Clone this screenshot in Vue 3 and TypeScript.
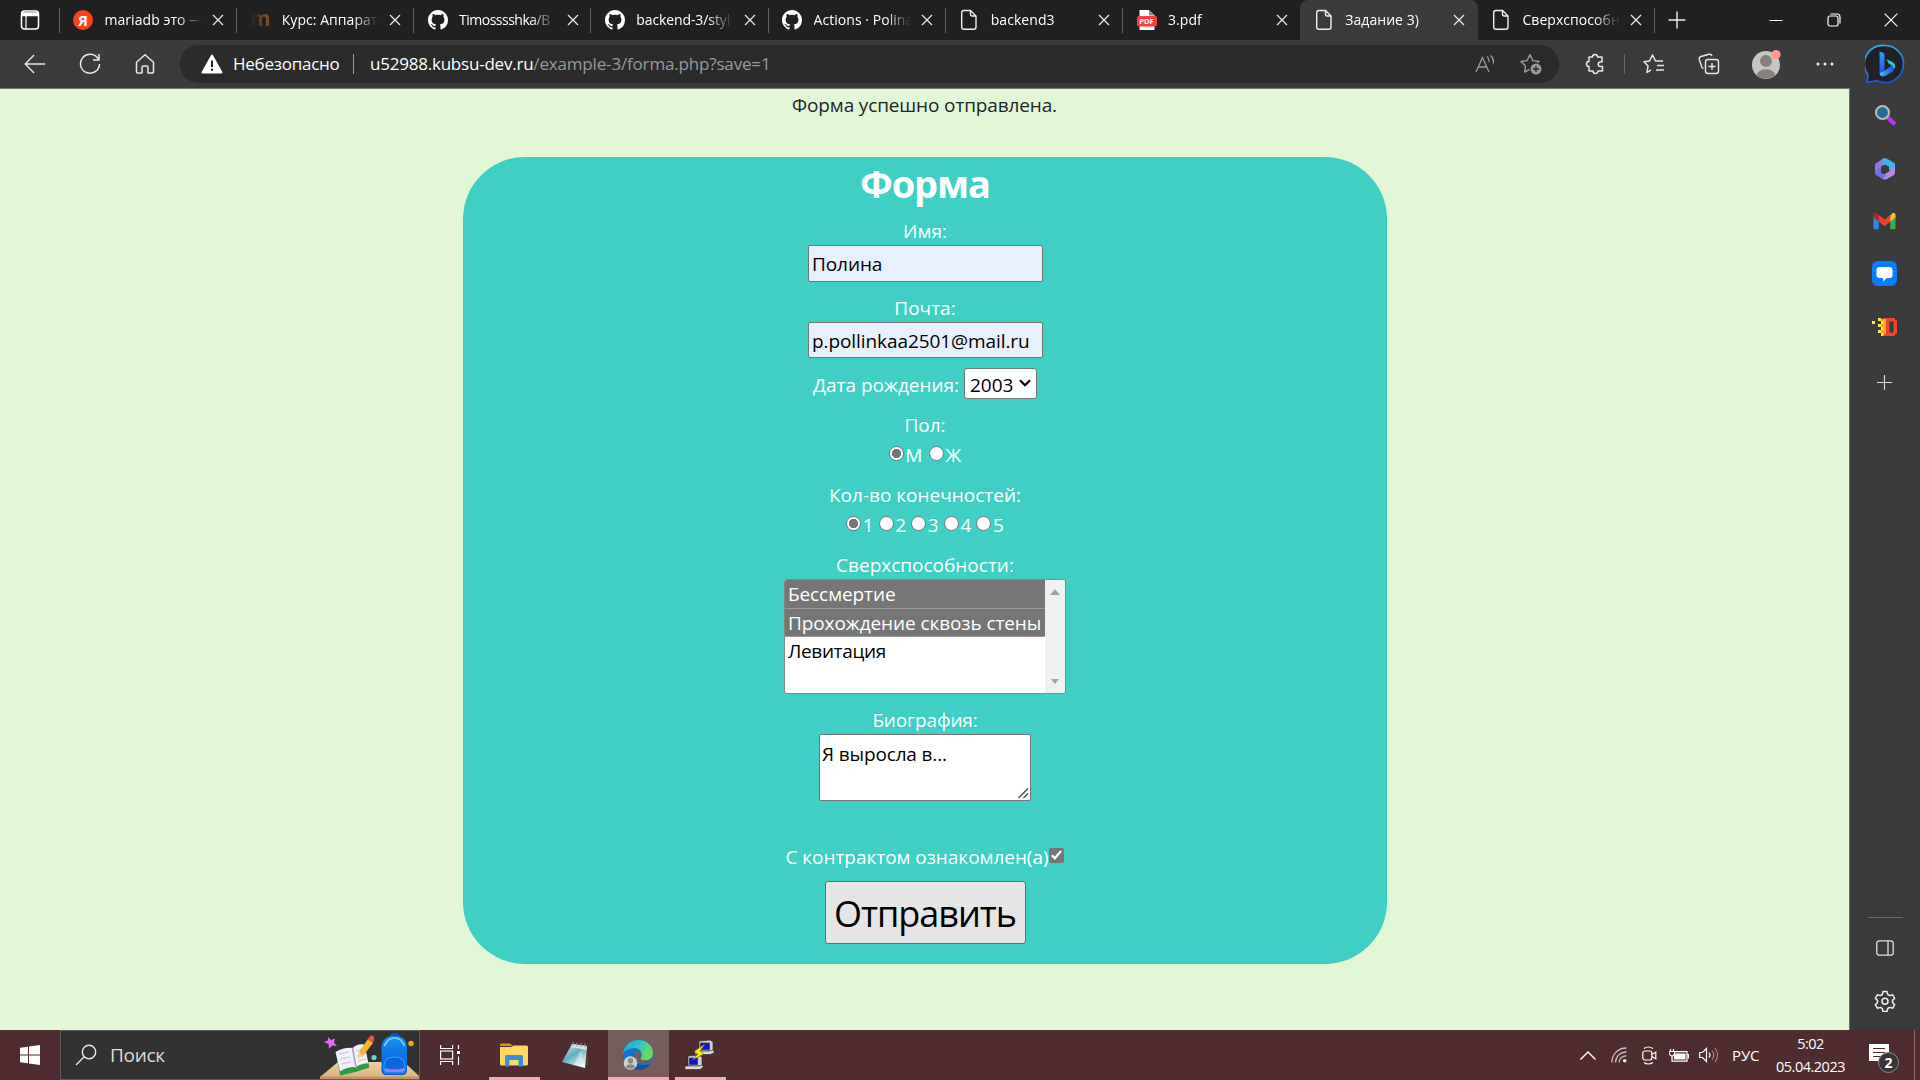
<script setup lang="ts">
import { ref } from 'vue'

interface Tab {
  icon: 'yandex' | 'moodle' | 'github' | 'file' | 'pdf'
  title: string
  active?: boolean
  noDivider?: boolean
  spacing?: string
}

const tabs: Tab[] = [
  { icon: 'yandex', title: 'mariadb это —' },
  { icon: 'moodle', title: 'Курс: Аппарат' },
  { icon: 'github', title: 'Timosssshka/B', spacing: 'tight' },
  { icon: 'github', title: 'backend-3/styl', spacing: 'snug' },
  { icon: 'github', title: 'Actions · Polina' },
  { icon: 'file', title: 'backend3' },
  { icon: 'pdf', title: '3.pdf', noDivider: true },
  { icon: 'file', title: 'Задание 3)', active: true, noDivider: true },
  { icon: 'file', title: 'Сверхспособн' },
]

const name = ref('Полина')
const email = ref('p.pollinkaa2501@mail.ru')
const bio = ref('Я выросла в...')
const gender = ref('М')
const limbs = ref('1')
const agreed = ref(true)
const powers = [
  { label: 'Бессмертие', selected: true },
  { label: 'Прохождение сквозь стены', selected: true },
  { label: 'Левитация', selected: false },
]
</script>

<template>
  <div class="screen">
    <header class="tabstrip">
      <div class="tab-menu">
        <svg width="20" height="22" viewBox="0 0 20 22" fill="none" stroke="#fff" stroke-width="1.5"><rect x="1.5" y="2" width="17" height="18" rx="3" /><path d="M2 4.5h16M2 6h16" stroke-width="2.4" /><path d="M6 7v13" stroke-width="1.2" /></svg>
      </div>
      <div v-for="(tab, i) in tabs" :key="i" class="tab" :class="{ active: tab.active, plain: tab.noDivider }">
        <span class="tab-icon">
          <span v-if="tab.icon === 'yandex'" class="yandex">Я</span>
          <span v-else-if="tab.icon === 'moodle'" class="moodle">m</span>
          <svg v-else-if="tab.icon === 'github'" width="20" height="20" viewBox="0 0 16 16" fill="#fff"><path d="M8 0C3.58 0 0 3.58 0 8c0 3.54 2.29 6.53 5.47 7.59.4.07.55-.17.55-.38 0-.19-.01-.82-.01-1.49-2.01.37-2.53-.49-2.69-.94-.09-.23-.48-.94-.82-1.13-.28-.15-.68-.52-.01-.53.63-.01 1.08.58 1.23.82.72 1.21 1.87.87 2.33.66.07-.52.28-.87.51-1.07-1.78-.2-3.64-.89-3.64-3.95 0-.87.31-1.59.82-2.15-.08-.2-.36-1.02.08-2.12 0 0 .67-.21 2.2.82.64-.18 1.32-.27 2-.27.68 0 1.36.09 2 .27 1.53-1.04 2.2-.82 2.2-.82.44 1.1.16 1.92.08 2.12.51.56.82 1.27.82 2.15 0 3.07-1.87 3.75-3.65 3.95.29.25.54.73.54 1.48 0 1.07-.01 1.93-.01 2.2 0 .21.15.46.55.38A8.013 8.013 0 0016 8c0-4.42-3.58-8-8-8z" /></svg>
          <svg v-else-if="tab.icon === 'file'" width="18" height="22" viewBox="0 0 18 22" fill="none" stroke="#eee" stroke-width="1.4"><path d="M4 1.5h6.5L16 7v11a2.300 2.300 0 0 1-2.300 2.300H4A2.300 2.300 0 0 1 1.700 18V3.800A2.300 2.300 0 0 1 4 1.500zM10.500 1.500V5.500A1.500 1.500 0 0 0 12 7h4" /></svg>
          <span v-else class="pdf"><svg width="20" height="20" viewBox="0 0 20 20"><path d="M2.500 0H12l5.500 5.500V20h-15z" fill="#fff" /><path d="M12 0v5.500h5.500z" fill="#888" /><rect y="6" width="20" height="10.500" rx="2" fill="#ff3b3f" /></svg><b>PDF</b></span>
        </span>
        <span class="tab-title" :class="tab.spacing">{{ tab.title }}</span>
        <svg class="tab-close" width="12" height="12" viewBox="0 0 12 12" stroke="#e6e6e6" stroke-width="1.3"><path d="M1 1l10 10M11 1L1 11" /></svg>
      </div>
      <svg class="new-tab" width="18" height="18" viewBox="0 0 18 18" stroke="#eee" stroke-width="1.4"><path d="M9 .5v17M.5 9h17" /></svg>
      <div class="window-controls">
        <svg width="14" height="14" viewBox="0 0 14 14" stroke="#fff"><path d="M.5 7.500h13" /></svg>
        <svg width="14" height="14" viewBox="0 0 14 14" fill="none" stroke="#fff" stroke-width="1.200"><rect x="1" y="3" width="10" height="10" rx="2" /><path d="M3.500 1h6.500a3 3 0 0 1 3 3v6.500" /></svg>
        <svg width="14" height="14" viewBox="0 0 14 14" stroke="#fff" stroke-width="1.200"><path d="M.7.700l12.600 12.600M13.300.700L.7 13.300" /></svg>
      </div>
    </header>

    <div class="toolbar">
      <div class="cell"><svg width="22" height="20" viewBox="0 0 22 20" fill="none" stroke="#e8e8e8" stroke-width="1.400"><path d="M21 10H1.500M10 1L1.200 10 10 19" /></svg></div>
      <div class="cell"><svg width="22" height="22" viewBox="0 0 22 22" fill="none" stroke="#e8e8e8" stroke-width="1.500"><path d="M19.500 6.500A9.500 9.500 0 1 0 20.500 11M20 1v6h-6" /></svg></div>
      <div class="cell"><svg width="20" height="22" viewBox="0 0 20 22" fill="none" stroke="#e8e8e8" stroke-width="1.500" stroke-linejoin="round"><path d="M10 1.800L1.500 9.200V19a1 1 0 0 0 1 1H7v-5.500a1.500 1.500 0 0 1 1.500-1.500h3a1.500 1.500 0 0 1 1.500 1.500V20h4.500a1 1 0 0 0 1-1V9.200z" /></svg></div>
      <div class="address">
        <svg class="warn" width="22" height="20" viewBox="0 0 22 20"><path d="M11 1.500L20.500 18.500H1.500z" fill="#fff" stroke="#fff" stroke-width="2" stroke-linejoin="round" /><path d="M11 6.500v6.500M11 14.500v2.300" stroke="#2b2b2b" stroke-width="2" /></svg>
        <span class="insecure">Небезопасно</span>
        <i class="bar-sep"></i>
        <span class="url"><span class="host">u52988.kubsu-dev.ru</span><span class="path">/example-3/forma.php?save=1</span></span>
        <svg class="read" width="20" height="18" viewBox="0 0 20 18" fill="none" stroke="#9a9a9a" stroke-width="1.300"><path d="M1 17L7.500 2.500 14 17M3.500 12h8M12 1.500c1.500 1.300 2.200 3 2 5.500M15.500.500C18 2.500 19 5 18.300 8.500" /></svg>
        <svg class="star" width="22" height="22" viewBox="0 0 22 22" fill="none" stroke="#9a9a9a" stroke-width="1.400"><path d="M9.500 16.500L4.500 19l1-6L1 8.500l6-.9L10 1.500l2.800 6.100 6.200.9-1.500 1.500" stroke-linejoin="round" /><circle cx="16" cy="16" r="5.500" fill="#9a9a9a" stroke="none" /><path d="M16 13v6M13 16h6" stroke="#2b2b2b" /></svg>
      </div>
      <div class="cell first"><svg width="20" height="22" viewBox="0 0 20 22" fill="none" stroke="#e8e8e8" stroke-width="1.500" stroke-linejoin="round"><path d="M4 4h3.500a2.500 2.500 0 0 1 5 0H17v5h-1.500a2 2 0 0 0 0 4.500H17.500V18H13a2.500 2.500 0 0 1-5 0H4v-4.500a2.500 2.500 0 0 1 0-5z" /></svg></div>
      <i class="tool-sep"></i>
      <div class="cell"><svg width="22" height="20" viewBox="0 0 22 20" fill="none" stroke="#e8e8e8" stroke-width="1.500" stroke-linejoin="round"><path d="M8 15.800L4 18.500l1-6.500L1 7.800l5.500-.8L9.500 1l3 6H20M14 11.500h7M13 16h8" /></svg></div>
      <div class="cell"><svg width="22" height="22" viewBox="0 0 22 22" fill="none" stroke="#e8e8e8" stroke-width="1.400"><rect x="7.500" y="6.500" width="13" height="14" rx="2.500" /><path d="M14 10v7M10.500 13.500h7M5.500 15.500A2.500 2.500 0 0 1 3.500 13L1.300 6.500A2.500 2.500 0 0 1 3 3.500L11 1.300A2.500 2.500 0 0 1 14 3" /></svg></div>
      <div class="cell wide"><svg width="32" height="32" viewBox="0 0 32 32"><circle cx="15" cy="17" r="14" fill="#c9c6c2" /><circle cx="15" cy="13" r="6" fill="#85817d" /><path d="M5.500 27a10 8.500 0 0 1 19 0 14 14 0 0 1-19 0z" fill="#85817d" /><circle cx="25" cy="6.500" r="4.600" fill="#ff9a94" /></svg></div>
      <div class="cell dots"><svg width="18" height="4" viewBox="0 0 18 4" fill="#eee"><circle cx="2" cy="2" r="1.500" /><circle cx="9" cy="2" r="1.500" /><circle cx="16" cy="2" r="1.500" /></svg></div>
      <div class="bing"><svg width="40" height="40" viewBox="0 0 40 40">
        <defs><linearGradient id="ring" x1="0" y1="0" x2=".3" y2="1"><stop offset="0" stop-color="#35b9ef" /><stop offset="1" stop-color="#1757e0" /></linearGradient><linearGradient id="bb" x1="0" y1="0" x2="1" y2="0"><stop offset="0" stop-color="#52c6f8" /><stop offset=".5" stop-color="#2b80f3" /><stop offset="1" stop-color="#1b50e0" /></linearGradient><linearGradient id="stem" x1="0" y1="0" x2="0" y2="1"><stop offset="0" stop-color="#2aa3f0" /><stop offset="1" stop-color="#1a4fe6" /></linearGradient></defs>
        <path d="M20 1.500A18.500 18.500 0 1 1 12 36.700L2 38.300 3 31A18.500 18.500 0 0 1 20 1.500z" fill="#202124" stroke="url(#ring)" stroke-width="1.700" />
        <path d="M14.500 7.500l3.500 1.300q1.500.6 1.500 2.200V26l-5 3.500z" fill="url(#stem)" /><path d="M14.500 29l5.500-2.500 8-6q3 4-.5 7.500L20 32q-5 1.500-5.500-3z" fill="url(#bb)" /><path d="M21.500 15.200l5.500 2.600q4 2 3 6.200-1 1.500-2.500-2.500L24 20z" fill="#33c5e3" />
      </svg></div>
    </div>

    <div class="body">
      <main class="page">
        <p class="message">Форма успешно отправлена.</p>
        <form class="card" @submit.prevent>
          <h1>Форма</h1>
          <label class="label">Имя:</label>
          <input v-model="name" class="text" type="text" spellcheck="false" />
          <label class="label mail">Почта:</label>
          <input v-model="email" class="text short" type="text" spellcheck="false" />
          <div class="birth">
            <span>Дата рождения:</span>
            <div class="select"><span>2003</span><svg width="12" height="8" viewBox="0 0 12 8" fill="none" stroke="#000" stroke-width="2.200"><path d="M1 1.300l5 5 5-5" /></svg></div>
          </div>
          <label class="label sex">Пол:</label>
          <div class="radios gender">
            <label v-for="g in ['М', 'Ж']" :key="g"><input v-model="gender" type="radio" name="gender" :value="g" />{{ g }}</label>
          </div>
          <label class="label limbs-label">Кол-во конечностей:</label>
          <div class="radios limbs">
            <label v-for="n in ['1', '2', '3', '4', '5']" :key="n"><input v-model="limbs" type="radio" name="limbs" :value="n" />{{ n }}</label>
          </div>
          <label class="label powers-label">Сверхспособности:</label>
          <div class="listbox">
            <div class="options">
              <div v-for="p in powers" :key="p.label" class="option" :class="{ selected: p.selected }">{{ p.label }}</div>
            </div>
            <div class="scroll">
              <svg width="10" height="6" viewBox="0 0 10 6"><path d="M5 0l5 6H0z" fill="#a3a3a3" /></svg>
              <svg width="8" height="5" viewBox="0 0 8 5"><path d="M0 0h8L4 5z" fill="#a3a3a3" /></svg>
            </div>
          </div>
          <label class="label bio-label">Биография:</label>
          <div class="area">
            <textarea v-model="bio" spellcheck="false"></textarea>
            <svg class="grip" width="11" height="11" viewBox="0 0 11 11" stroke="#444" stroke-width="1.200"><path d="M.5 10L10 .5M5.500 10L10 5.500" /></svg>
          </div>
          <div class="agree"><span>С контрактом ознакомлен(а)</span>
            <button type="button" class="check" @click="agreed = !agreed"><svg v-if="agreed" width="11" height="10" viewBox="0 0 11 10" fill="none" stroke="#fff" stroke-width="2.200"><path d="M.8 5.300l3 3L10 1" /></svg></button>
          </div>
          <button class="submit" type="submit">Отправить</button>
        </form>
      </main>

      <aside class="sidebar">
        <div class="side-item"><svg width="22" height="22" viewBox="0 0 22 22"><path d="M14.500 14l5 5" stroke="#b936ee" stroke-width="4.500" stroke-linecap="round" /><circle cx="8.500" cy="8.500" r="6.500" fill="#1f6d96" stroke="#b9b9b9" stroke-width="2.200" /></svg></div>
        <div class="side-item office"><svg width="22" height="22" viewBox="0 0 22 22"><path d="M1 6l8-5.500L12 0 10 8 7 10v6l-3 1-3-2z" fill="#8f7ad8" /><path d="M9 .8Q11-.4 13 .8L21 5.300v9.200l-6-2.500V8.500L8 5.500z" fill="#3ab4ee" /><path d="M21 9v6q0 1.500-1.500 2.200L13 21q-2 1-4 0l-3-2 9-5.500z" fill="#b987dd" /><path d="M1 12l6-2v4.500l5 3-3.500 3.300L2 17q-1-.8-1-2z" fill="#6f74dc" /><path d="M8.500 7.500L11 7l4 2.200v3.600L11 15l-4-2.200V9z" fill="#3b3b3b" /></svg></div>
        <div class="side-item"><svg width="23" height="18" viewBox="0 0 23 18"><path d="M.5 4v12a1.300 1.300 0 0 0 1.300 1.300h4V7z" fill="#2f86e5" /><path d="M22.500 4v12a1.300 1.300 0 0 1-1.300 1.300h-4V7z" fill="#43a94b" /><path d="M17.200 3.500L20 .8a2 2 0 0 1 2.500 2V5.500L17.200 9.700z" fill="#fbbc2c" /><path d="M.5 5.500V2.800a2 2 0 0 1 2.500-2l2.800 2.700v6.200z" fill="#c5221f" /><path d="M5.800 3l5.700 4.500L17.200 3v6.700L11.500 14 5.800 9.700z" fill="#ea4335" /></svg></div>
        <div class="side-item"><svg width="25" height="25" viewBox="0 0 25 25"><rect width="25" height="25" rx="6" fill="#0a7cff" /><path d="M7.500 6h10a3 3 0 0 1 3 3v5a3 3 0 0 1-3 3h-2.500l-4 3.500V17H7.500a3 3 0 0 1-3-3V9a3 3 0 0 1 3-3z" fill="#fff" /></svg></div>
        <div class="side-item"><svg width="26" height="18" viewBox="0 0 26 18"><path d="M12 0h11v2h2v14h-2v2H11V0z" fill="#ef4432" /><path d="M17.500 3.500H21.500v11h-4z" fill="#3b3b3b" /><path d="M9 1h5v15h-5z" fill="#f9a61d" /><path d="M0 3h3v3H0zM6 0h3v3H6zM9 3h2.500v3H9zM6 6h3v3H6zM9 9h2.500v3H9zM6 12h3v3H6zM9 15h2.500v3H9z" fill="#fbe34d" /></svg></div>
        <div class="side-item plus"><svg width="15" height="15" viewBox="0 0 15 15" stroke="#ddd" stroke-width="1.100"><path d="M7.500 0v15M0 7.500h15" /></svg></div>
        <i class="side-sep"></i>
        <div class="side-item"><svg width="18" height="16" viewBox="0 0 18 16" fill="none" stroke="#e0e0e0" stroke-width="1.300"><rect x=".8" y=".8" width="16.400" height="14.400" rx="2.500" /><path d="M12 1v14" /></svg></div>
        <div class="side-item"><svg width="22" height="22" viewBox="0 0 22 22" fill="none" stroke="#eee" stroke-width="1.500" stroke-linejoin="round"><path d="M9 1.500h4l.7 3 2 1.100 3-.8 2 3.500-2.200 2.100v2.200l2.200 2.100-2 3.500-3-.8-2 1.100-.7 3H9l-.7-3-2-1.100-3 .8-2-3.500 2.200-2.100v-2.200L1.300 8.300l2-3.500 3 .8 2-1.100z" /><circle cx="11" cy="11.300" r="3" /></svg></div>
      </aside>
    </div>

    <footer class="taskbar">
      <div class="start"><svg width="20" height="20" viewBox="0 0 20 20" fill="#fff"><path d="M0 2.800l8-1.100v7.800H0zM9 1.500L20 0v9.500H9zM0 10.500h8v7.800l-8-1.100zM9 10.500h11V20L9 18.500z" /></svg></div>
      <div class="search">
        <svg width="22" height="22" viewBox="0 0 22 22" fill="none" stroke="#e6e6e6" stroke-width="1.400"><circle cx="14" cy="8" r="6.700" /><path d="M9.200 12.800L1 21" /></svg>
        <span>Поиск</span>
        <svg class="doodle" width="99" height="48" viewBox="0 0 99 48">
          <defs><linearGradient id="bag" x1="0" y1="0" x2="0" y2="1"><stop offset="0" stop-color="#1593f5" /><stop offset="1" stop-color="#0a55cf" /></linearGradient><linearGradient id="desk" x1="0" y1="0" x2="0" y2="1"><stop offset="0" stop-color="#f0cfa3" /><stop offset="1" stop-color="#d9af7e" /></linearGradient></defs>
          <path d="M18 31h66l15 14v3H0v-2z" fill="url(#desk)" /><path d="M0 45.500h99V48H0z" fill="#c0935f" />
          <path d="M8 6l3 3 4-1.500-1 4 3 3.500-4.500-.5L9 17.500 8.500 13 4 11l4-1.500z" fill="#e06bf0" />
          <path d="M16 22l4 22.500 15.500-3.500 14-4.500-1-5-14 4-14 2.500z" fill="#2c9c46" />
          <path d="M15.500 21q9-5 17-4 5-5 12-3.500l4 19q-8-1-12.500 4-7-2-16 4z" fill="#f3effb" /><path d="M32.500 17l3.500 19" stroke="#a9a0c6" stroke-width="1.500" /><path d="M19 23l10-2M20 28l10-2M21 33l10-2M36 20l7-2M37 25l8-2M38 30l8-2" stroke="#c9c3dc" />
          <path d="M39 21l9-13 5 4-10 13-5 2z" fill="#f7b62c" /><path d="M48 8l2.500-3.500q4-.5 3.500 4L53 12z" fill="#f05340" /><path d="M39 21l4 4-5 2z" fill="#e9cfae" />
          <circle cx="54" cy="26.500" r="2.600" fill="#62d7e4" /><circle cx="91" cy="12.500" r="2.700" fill="#f7a80c" />
          <path d="M71 7q0-4 4-4t4 4" fill="none" stroke="#0b5fd0" stroke-width="2" />
          <path d="M61.500 17Q62 5 74.500 5T87 17v22q0 5-5 5H66.500q-5 0-5-5z" fill="url(#bag)" /><path d="M64.500 15q3-8 10-8t10 8" fill="none" stroke="#8cd0ff" stroke-width="1.600" />
          <path d="M64 35q0-9 10.500-9T85 35v4q0 3-3 3H67q-3 0-3-3z" fill="#0967df" stroke="#29a8ff" /><path d="M65 37q9 3 19 0v2q0 2-3 2H68q-3 0-3-2z" fill="#9c7bf4" />
        </svg>
      </div>
      <div class="app task"><svg width="20" height="20" viewBox="0 0 20 20" fill="none" stroke="#fff" stroke-width="1.200"><path d="M.6 0v3.500h12V0M.6 20v-3.500h12V20" /><rect x=".6" y="6" width="12" height="8" /><path d="M18.500 0v4M18.500 11.500V20" /><path d="M17 6h3v3h-3z" fill="#fff" stroke="none" /></svg></div>
      <div class="app explorer"><svg width="28" height="24" viewBox="0 0 28 24"><path d="M0 2q0-1.500 1.500-1.500H10L13 3H0z" fill="#dd9b0a" /><path d="M0 4h11l3-1.500h12.500Q28 2.500 28 4v17q0 1.500-1.500 1.500h-25Q0 22.500 0 21z" fill="#ffd763" /><path d="M5 23.500V14q0-2 2-2h14q2 0 2 2v9.500h-4.500V17h-9v6.500z" fill="#3790da" /></svg></div>
      <div class="app note"><svg width="28" height="28" viewBox="0 0 28 28"><defs><linearGradient id="np" x1="0" y1="0" x2=".7" y2="1"><stop offset="0" stop-color="#dff3f6" /><stop offset=".5" stop-color="#61b0c1" /><stop offset="1" stop-color="#e9f7f9" /></linearGradient></defs><path d="M24 4l3 19-4 3z" fill="#5c4122" /><path d="M10 3l15 2-2 22L0 21z" fill="url(#np)" /><path d="M10 3l15 2-.3 4L9 6z" fill="#d9dfe0" /><path d="M19 9l4 18-11-3z" fill="#fff" opacity=".35" /><path d="M11 1v4M15 1.500v4M19 2v4M23 2.500v4" stroke="#999" /></svg></div>
      <div class="app edge"><svg width="30" height="30" viewBox="0 0 30 30"><defs><linearGradient id="eg" x1="0" y1="0" x2="1" y2=".4"><stop offset="0" stop-color="#1e9be0" /><stop offset=".5" stop-color="#2cc2cf" /><stop offset="1" stop-color="#68dd5b" /></linearGradient></defs><circle cx="15" cy="15" r="15" fill="#1573cf" /><path d="M0 14C1 5 8 0 15 0c9 0 15 6 15 13 0 5-4 7.500-8 7.500-3 0-5-1-4.500-2.500C20 15 19 9 12 8 6 8 1 11 0 14z" fill="url(#eg)" /><path d="M10 15c0 7 6 13 17 9-3 4-7 6-12 6-8-1-9-11-5-15z" fill="#154f9c" /><path d="M17.500 18c2-2 1-6-3-6.500-3 1-4 6-1.500 9 3 3.500 9 4 15 1l1-4c-4 4-11 4-11.500.5z" fill="#755c5d" /><circle cx="7.500" cy="23" r="6.800" fill="#d2d0ce" /><circle cx="7.500" cy="20.800" r="2.800" fill="#8a8886" /><path d="M2.800 27a5 4 0 0 1 9.400 0q-4.700 3.500-9.400 0z" fill="#8a8886" /></svg></div>
      <div class="app putty"><svg width="30" height="30" viewBox="0 0 30 30" stroke="#222" stroke-width=".6"><path d="M14 1l11-1 3 2v9H14z" fill="#cfcfcf" /><path d="M15.500 3h9v6.500h-9z" fill="#1212d8" /><path d="M10 11h15l4-1v3l-4 1.500H10z" fill="#dcdcdc" /><path d="M3 16l11-1 3 2v9H3z" fill="#cfcfcf" /><path d="M4.500 18h8v6.500h-8z" fill="#1212d8" /><path d="M0 26h14l4-1v2.500L15 29.500H0z" fill="#dcdcdc" /><path d="M20 4L9 11.500l4 2.500-6 6 12-6-4-3z" fill="#f6ee12" stroke="#6a6a00" /></svg></div>
      <div class="tray">
        <svg class="t-up" width="16" height="9" viewBox="0 0 16 9" fill="none" stroke="#fff" stroke-width="1.400"><path d="M.5 8.500L8 1l7.500 7.500" /></svg>
        <svg class="t-wifi" width="16" height="16" viewBox="0 0 16 16" fill="none" stroke="#cbbfc0" stroke-width="1.300"><path d="M1 15.500A14 14 0 0 1 15.500 1M4.500 15.500A10.500 10.500 0 0 1 15.500 5M8 15.500A7 7 0 0 1 15.500 8.800" /><circle cx="13.700" cy="13.700" r="1.800" fill="#fff" stroke="none" /></svg>
        <svg class="t-meet" width="15" height="19" viewBox="0 0 15 19" fill="none" stroke="#fff" stroke-width="1.200"><rect x=".8" y="5" width="9" height="9" rx="2" /><path d="M10 8.500L13.800 6v7L10 10.500M2 2.500q4-3 9 0M2 16.500q4 3 9 0" /></svg>
        <svg class="t-bat" width="20" height="13" viewBox="0 0 20 13" fill="none" stroke="#fff" stroke-width="1.200"><path d="M6 2.600h12v9.500H3V8M18.500 5.500h1v4" /><path d="M5 4.500h11.500v6H5z" fill="#fff" stroke="none" /><path d="M1.500 0v2.500M4.500 0v2.500M.5 2.500h5v2Q5 7 3 7T.5 4.500zM3 7v2" /></svg>
        <svg class="t-vol" width="20" height="16" viewBox="0 0 20 16" fill="none" stroke="#fff" stroke-width="1.200"><path d="M.7 5.500h2.800L7.500 1.500v13l-4-4H.7zM10 5.500q2 2.500 0 5" /><path d="M13 3.500q3.500 4.500 0 9M16 1q5 7 0 14" stroke="#9c8587" /></svg>
        <span class="lang">РУС</span>
        <div class="clock"><span>5:02</span><span>05.04.2023</span></div>
        <div class="notify"><svg width="20" height="22" viewBox="0 0 20 22"><path d="M0 0h20v17h-6.500v5l-5-5H0z" fill="#fff" /><path d="M4 4.500h12M4 8.500h12M4 12.500h8" stroke="#4c2a2d" stroke-width="1.200" /></svg><b>2</b></div>
        <i class="desk-line"></i>
      </div>
    </footer>
  </div>
</template>

<style>
body { overflow: hidden; background: #202020; }
</style>

<style scoped>
* { box-sizing: border-box; }
.screen { width: 1920px; height: 1080px; display: flex; flex-direction: column; font-family: "Open Sans", "Noto Sans", sans-serif; overflow: hidden; }
svg { display: block; flex: none; }

.tabstrip { height: 40px; background: #202020; display: flex; align-items: center; flex: none; }
.tab-menu { width: 59.500px; height: 25px; padding-left: 20px; display: flex; align-items: center; border-right: 1px solid #606060; flex: none; }
.tab { width: 177.250px; height: 40px; flex: none; display: flex; align-items: center; padding-left: 13px; background: linear-gradient(#606060, #606060) right 8px / 1px 25px no-repeat; }
.tab.plain { background-image: none; }
.tab.active { background-color: #3b3b3b; border-radius: 8px 8px 0 0; }
.tab-icon { width: 21px; height: 22px; display: flex; align-items: center; justify-content: center; flex: none; }
.yandex { width: 20px; height: 20px; border-radius: 50%; background: #fc3f1d; color: #fff; font: 700 15px/20px "Open Sans", sans-serif; text-align: center; }
.moodle { color: #7d4a1e; font: 700 21px/20px "Open Sans", sans-serif; height: 24px; -webkit-mask-image: linear-gradient(90deg, rgba(0, 0, 0, .1), rgba(0, 0, 0, .3) 35%, #000 60%); mask-image: linear-gradient(90deg, rgba(0, 0, 0, .1), rgba(0, 0, 0, .3) 35%, #000 60%); }
.pdf { position: relative; width: 20px; height: 20px; }
.pdf b { position: absolute; inset: 6px 0 auto; font: 700 7.500px/10.500px "Open Sans", sans-serif; color: #fff; text-align: center; }
.tab-title { margin-left: 11px; width: 99px; flex: none; font-size: 14px; line-height: 20px; color: #fff; white-space: nowrap; overflow: hidden; letter-spacing: .05px; -webkit-mask-image: linear-gradient(90deg, #000 72%, transparent 98%); mask-image: linear-gradient(90deg, #000 72%, transparent 98%); }
.tab-title.tight { letter-spacing: -.5px; }
.tab-title.snug { letter-spacing: -.1px; }
.tab-close { margin-left: 8.500px; }
.new-tab { margin-left: 13px; }
.window-controls { margin-left: auto; margin-right: 22px; display: flex; gap: 43.500px; }

.toolbar { height: 48px; background: #3b3b3b; display: flex; align-items: center; padding-left: 7.500px; flex: none; }
.cell { width: 55px; display: flex; justify-content: center; flex: none; }
.cell.first { margin-left: 8.500px; width: 54.500px; }
.cell.wide { width: 61px; }
.address { margin-left: 7.500px; width: 1379px; height: 38px; border-radius: 19px; background: #2b2b2b; display: flex; align-items: center; padding-left: 21px; flex: none; }
.insecure { margin-left: 10px; width: 120px; color: #fff; font-size: 17px; line-height: 24px; margin-top: -1px; letter-spacing: -.25px; white-space: nowrap; }
.bar-sep { width: 1px; height: 20px; background: #999; margin: 0 16px 0 0; }
.url { font-size: 17px; line-height: 24px; margin-top: -1px; white-space: nowrap; }
.host { color: #fff; letter-spacing: -.22px; }
.path { color: #999; letter-spacing: -.17px; }
.read { margin-left: auto; }
.star { margin-left: 25px; margin-right: 17px; }
.tool-sep { width: 1px; height: 20px; background: #666; margin: 0 1.500px 0 2px; }
.bing { margin-left: 12px; }

.body { height: 942px; display: flex; flex: none; background: #3b3b3b; }
.page { width: 1850px; background: #e2f7d6; border-top: 1px solid #76786f; border-right: 1px solid #6c6e69; display: flex; flex-direction: column; align-items: center; flex: none; }
.message { margin: 0; padding-top: 1px; height: 67.500px; font-size: 19px; line-height: 30px; letter-spacing: -.14px; color: #212529; flex: none; }
.card { width: 924px; height: 807px; margin-left: 1px; border-radius: 62px; background: #3fcfc5; display: flex; flex-direction: column; align-items: center; color: #fff; font-size: 19px; line-height: 30px; flex: none; white-space: nowrap; }
h1 { margin: 0; font-size: 38px; font-weight: 700; line-height: 53px; height: 59.500px; letter-spacing: -1.100px; }
.label { height: 29px; line-height: 30px; }
.mail { margin-top: 11px; }
.text { width: 235px; height: 37px; border: 1px solid #767676; border-radius: 2px; background: #e8f0fe; color: #000; font: 19px "Open Sans", sans-serif; padding: 2px 3px 1px 3.500px; outline: none; letter-spacing: -.08px; flex: none; }
.text.short { height: 36px; padding-top: 3px; }
.birth { margin-top: 10px; height: 31px; display: flex; align-items: center; gap: 5px; }
.birth > span { padding-top: 3px; }
.select { width: 73px; height: 31px; background: #fff; border: 1px solid #767676; border-radius: 3px; color: #000; display: flex; align-items: center; justify-content: space-between; padding: 3px 5px 0 5px; letter-spacing: -.1px; }
.select svg { margin-top: -5px; }
.sex { margin-top: 11px; }
.radios { height: 30px; display: flex; }
.radios label { display: flex; align-items: center; }
.radios input { appearance: none; width: 15px; height: 15px; margin: -3px 1.500px 0 0; border-radius: 50%; border: 1.300px solid #767676; background: #fff; flex: none; }
.radios input:checked { background: radial-gradient(circle, #767676 0 4.400px, #fff 5px); }
.gender { gap: 6.500px; margin-top: 1px; }
.limbs-label { margin-top: 10px; }
.limbs { gap: 5.200px; margin-top: 1px; }
.powers-label { margin-top: 10px; height: 29px; }
.listbox { width: 282px; height: 115px; border: 1px solid #868686; border-radius: 3px; background: #fff; display: flex; overflow: hidden; flex: none; }
.options { width: 259.500px; padding-top: 0; flex: none; }
.option { height: 28.500px; line-height: 29.500px; padding-left: 3px; color: #000; border-bottom: 1px solid transparent; letter-spacing: -.09px; }
.option.selected { background: #767676; color: #fff; border-bottom-color: #999; }
.option:last-child { letter-spacing: -.35px; }
.scroll { flex: 1; background: #f0f0f0; display: flex; flex-direction: column; justify-content: space-between; align-items: center; padding: 9px 0; }
.bio-label { margin-top: 11px; height: 29px; letter-spacing: -.15px; }
.area { position: relative; width: 212px; height: 67px; flex: none; }
textarea { display: block; width: 212px; height: 67px; border: 1px solid #767676; border-radius: 2px; background: #fff; color: #000; font: 19px/30px "Open Sans", sans-serif; letter-spacing: -.14px; padding: 4px 2px; resize: none; outline: none; overflow: hidden; }
.grip { position: absolute; right: 2px; bottom: 2px; }
.agree { margin-top: 41px; height: 30px; display: flex; align-items: center; gap: 0; letter-spacing: -.04px; margin-left: -1px; }
.check { width: 15px; height: 15px; margin-top: -4px; padding: 0; border: 0; border-radius: 2px; background: #767676; display: flex; align-items: center; justify-content: center; }
.submit { margin-top: 9px; width: 201px; height: 63px; padding: 3px 0 0; border: 1px solid #6a6a6a; border-radius: 3px; background: #e5e5e5; color: #000; font: 36px/50px "Open Sans", sans-serif; letter-spacing: -1px; flex: none; }

.sidebar { flex: 1; display: flex; flex-direction: column; align-items: center; padding-bottom: 3px; }
.side-item { height: 53px; width: 71px; padding-right: 2px; display: flex; align-items: center; justify-content: center; flex: none; }
.side-item.office { padding-top: 2px; }
.plus { margin-top: 3px; }
.side-sep { margin-top: auto; width: 35px; height: 1px; background: #6c6c6c; margin-bottom: 3px; }

.taskbar { height: 50px; background: #4f2c2f; display: flex; flex: none; }
.start { width: 60px; display: flex; align-items: center; justify-content: center; }
.search { width: 360px; border: 1px solid #5c5c5c; background: #323232; display: flex; align-items: center; padding-left: 13.500px; }
.search span { margin-left: 13.500px; font-size: 19px; letter-spacing: -.3px; color: #ddd; margin-top: -1px; }
.doodle { margin-left: auto; }
.app { display: flex; align-items: center; justify-content: center; height: 50px; flex: none; }
.task { width: 60px; }
.explorer { margin-left: 9px; width: 51px; border-bottom: 3px solid #ffa6b3; padding: 2px 2px 0 0; }
.note { width: 68px; padding-left: 3px; }
.edge { width: 61px; background: #755c5d; border-bottom: 3px solid #ffa6b3; padding: 3px 2px 0 0; }
.putty { margin-left: 6px; width: 51px; border-bottom: 3px solid #ffa6b3; padding: 3px 2px 0 0; }
.tray { margin-left: auto; display: flex; align-items: center; color: #fff; }
.t-wifi { margin-left: 15px; }
.t-meet { margin-left: 15px; }
.t-bat { margin-left: 12px; }
.t-vol { margin-left: 10px; }
.lang { margin-left: 13px; width: 28px; font-size: 15px; letter-spacing: -.14px; margin-top: -1px; }
.clock { margin-left: 14.500px; width: 72px; display: flex; flex-direction: column; align-items: center; font-size: 14.500px; line-height: 23px; letter-spacing: -.5px; white-space: nowrap; }
.notify { margin-left: 22.500px; position: relative; width: 20px; height: 22px; margin-top: 0; }
.notify b { position: absolute; left: 9px; top: 8px; width: 21px; height: 21px; border-radius: 50%; border: 1px solid #8b8b8b; background: #3a3638; color: #fff; font-size: 14px; line-height: 19px; text-align: center; }
.desk-line { width: 1px; height: 50px; background: #8a7274; margin-left: 25px; margin-right: 5px; }
</style>
